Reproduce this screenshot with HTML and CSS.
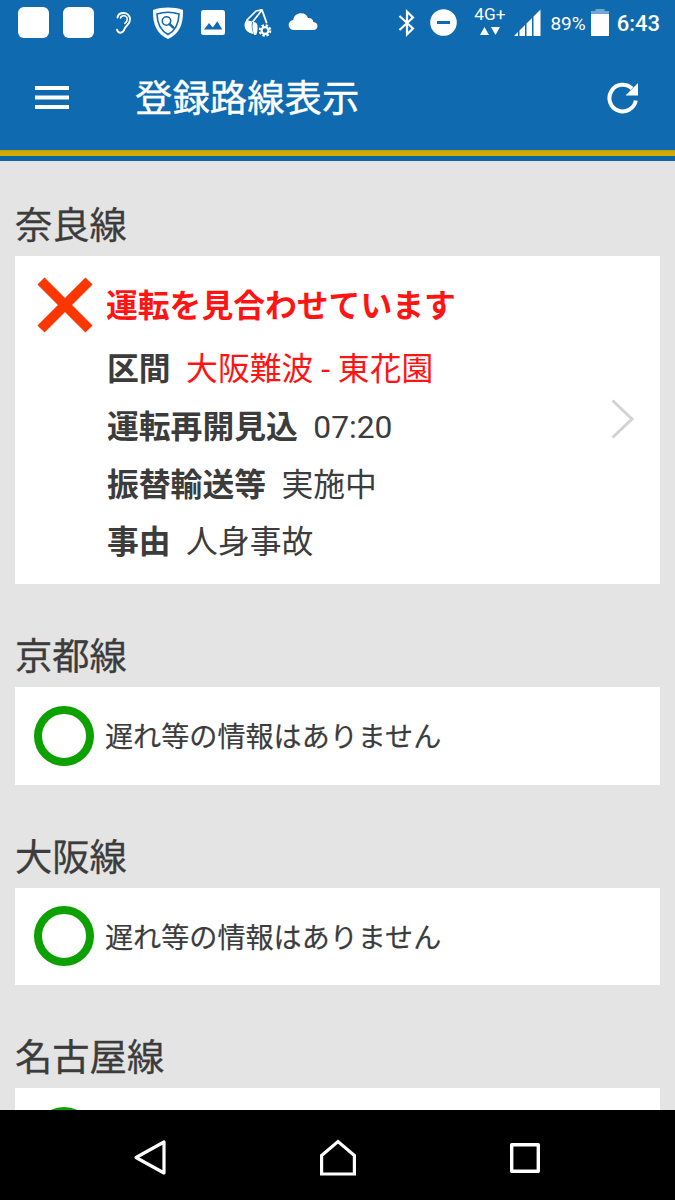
FILE: index.html
```html
<!DOCTYPE html>
<html lang="ja">
<head>
    <meta charset="UTF-8">
    <meta name="viewport" content="width=device-width, initial-scale=1.0">
    <title>登録路線表示</title>
    <link rel="stylesheet" href="styles.css">
</head>
<body>
    <div class="status-bar">
        <div class="notifications">
            <span class="app-square"></span>
            <span class="app-square"></span>
            <svg class="ear" width="17" height="24" viewBox="0 0 17 24" fill="none" stroke="#fff" stroke-width="1.9" stroke-linecap="round">
                <path d="M2.500 6.500C3 3.500 5.300 2 8.500 2c4 0 6.500 2.700 6.500 6.500 0 5-4 5.500-5.500 9.500-.9 2.500-2 3.700-4 3.700-2 0-3-1.200-3.500-3"/>
                <path d="M5.500 7C6 5.300 7 4.800 8.500 4.800c2.500 0 3.700 1.600 3.700 3.700 0 1.800-1 2.800-2.400 3.800" stroke-width="1.600"/>
            </svg>
            <svg class="shield" width="32" height="32" viewBox="0 0 32 32">
                <path d="M1 3C11-.2 21-.2 31 3c.4 14-3.500 23.500-15 29C4.500 26.500.6 17 1 3z" fill="#fff"/>
                <path d="M5 7C12 4.800 20 4.800 27 7c-.3 10-3 16.500-11 20.500C8 23.500 5.300 16.500 5 7z" fill="#fff" stroke="#0f6ab0" stroke-width="1.600"/>
                <circle cx="14.500" cy="14" r="4.200" fill="none" stroke="#0f6ab0" stroke-width="1.600"/>
                <path d="M17.600 17.100l3.500 3.300" stroke="#0f6ab0" stroke-width="2.600" stroke-linecap="round"/>
            </svg>
            <svg class="photo" width="24" height="25" viewBox="0 0 24 25">
                <rect width="24" height="25" rx="2.500" fill="#fff"/>
                <path d="M3 19.500l5-6.500 3.800 4.500 4.500-6.200 5 8.200z" fill="#0f6ab0"/>
            </svg>
            <svg class="bag" width="28" height="28" viewBox="0 0 28 28">
                <path d="M2.500 11.500L12 2l6-1.200M8.500 13L18 1" fill="none" stroke="#fff" stroke-width="1.700" stroke-linejoin="round"/>
                <path d="M18 1l4.500 12.500" fill="none" stroke="#fff" stroke-width="1.900" stroke-linecap="round"/>
                <path d="M2.500 11l5.700 1.500c-1 4-.5 8 1.500 12.500C1.500 24-2 16.500 2.500 11z" fill="#fff"/>
                <path d="M9 13c3.500-.2 5.200 2.500 4.500 7.500-.5 3.500-.5 6-3.300 5.500-1.500-4-2.400-8-1.200-13z" fill="#fff"/>
                <circle cx="21" cy="21.500" r="3.400" fill="none" stroke="#fff" stroke-width="2.200"/>
                <circle cx="21" cy="21.500" r="5.200" fill="none" stroke="#fff" stroke-width="2.200" stroke-dasharray="2.400 1.684"/>
            </svg>
            <svg class="cloud" width="30" height="18" viewBox="0 0 30 18">
                <path d="M6 17a5 5 0 0 1-.7-10C6 2.500 9 .3 13 .3c3.500 0 6 1.700 7 4.700 3.200-.3 5 1.300 5.300 3.900C28 9.200 29.500 10.500 29.500 13s-2 4-4 4z" fill="#fff"/>
            </svg>
        </div>
        <div class="system">
            <svg class="bluetooth" width="18" height="28" viewBox="0 0 18 28" fill="none" stroke="#fff" stroke-width="2.200">
                <path d="M1.500 7L15 19.500l-6 5.800V2.700l6 5.800L1.500 21"/>
            </svg>
            <svg class="dnd" width="27" height="27" viewBox="0 0 27 27">
                <circle cx="13.500" cy="13.500" r="13.300" fill="#fff"/>
                <path d="M7 13.500h13" stroke="#0f6ab0" stroke-width="3"/>
            </svg>
            <div class="network">
                <span>4G+</span>
                <svg width="20" height="8" viewBox="0 0 20 8" fill="#fff">
                    <path d="M0 8L4.500 0 9 8zM11 0h9l-4.500 8z"/>
                </svg>
            </div>
            <svg class="signal" width="27" height="27" viewBox="0 0 27 27" fill="#fff">
                <path d="M0 27l4-4v4zM5.500 21.500l5.500-5.500V27H5.500zM12.500 14.500L18 9v18h-5.500zM19.500 7.500L26.500 .5V27h-7z"/>
            </svg>
            <span class="percent">89%</span>
            <svg class="battery" width="18" height="27" viewBox="0 0 18 27">
                <path d="M4.500 0h9v2H18v4H0V2h4.500z" fill="#6fa6d2"/>
                <path d="M0 5h18v22H0z" fill="#fff"/>
            </svg>
            <span class="clock">6:43</span>
        </div>
    </div>

    <header class="toolbar">
        <svg class="menu" width="34" height="24" viewBox="0 0 34 24" fill="#fff">
            <path d="M0 0h34v4H0zM0 9.500h34v4H0zM0 19h34v4H0z"/>
        </svg>
        <h1>登録路線表示</h1>
        <svg class="reload" width="32" height="32" viewBox="0 0 32 32">
            <path d="M28.800 18.500A13.300 13.300 0 1 1 25 6.500" fill="none" stroke="#fff" stroke-width="4"/>
            <path d="M31 1v12.500H18.500z" fill="#fff"/>
        </svg>
    </header>
    <div class="line-gold"></div>
    <div class="line-blue"></div>

    <main>
        <section>
            <h2>奈良線</h2>
            <div class="card card-stopped">
                <div class="info">
                    <div class="status">
                        <svg class="cross" width="56" height="56" viewBox="0 0 56 56">
                            <path d="M4 4l48 48M52 4L4 52" stroke="#fb3600" stroke-width="10"/>
                        </svg>
                        <strong>運転を見合わせています</strong>
                    </div>
                    <dl>
                        <div class="row"><dt>区間</dt><dd class="red">大阪難波 - 東花園</dd></div>
                        <div class="row"><dt>運転再開見込</dt><dd>07:20</dd></div>
                        <div class="row"><dt>振替輸送等</dt><dd>実施中</dd></div>
                        <div class="row"><dt>事由</dt><dd>人身事故</dd></div>
                    </dl>
                </div>
                <svg class="arrow" width="24" height="40" viewBox="0 0 24 40">
                    <path d="M1.500 1.500L21 20 1.500 38.500" fill="none" stroke="#d3d3d3" stroke-width="3"/>
                </svg>
            </div>
        </section>
        <section>
            <h2>京都線</h2>
            <div class="card card-normal">
                <span class="circle"></span>
                <p>遅れ等の情報はありません</p>
            </div>
        </section>
        <section>
            <h2>大阪線</h2>
            <div class="card card-normal">
                <span class="circle"></span>
                <p>遅れ等の情報はありません</p>
            </div>
        </section>
        <section>
            <h2>名古屋線</h2>
            <div class="card card-normal">
                <span class="circle"></span>
            </div>
        </section>
    </main>

    <nav class="nav-bar">
        <svg width="34" height="38" viewBox="0 0 34 38" fill="none" stroke="#fff" stroke-width="3.200" stroke-linejoin="round">
            <path d="M31 3v31L3 18.500z"/>
        </svg>
        <svg width="38" height="38" viewBox="0 0 38 38" fill="none" stroke="#fff" stroke-width="3.200">
            <path d="M2.600 35V16.500L19 2.500l16.400 14V35z"/>
        </svg>
        <svg width="32" height="32" viewBox="0 0 32 32" fill="none" stroke="#fff" stroke-width="3.400" stroke-linejoin="round">
            <path d="M2.700 2.700h26.600v26.600H2.700z"/>
        </svg>
    </nav>
</body>
</html>
```
FILE: styles.css
```css
* {
    box-sizing: border-box;
}
body {
    font-family: Roboto, "Noto Sans CJK JP", sans-serif;
    background: #e4e4e4;
    color: #3c3c3c;
    margin: 0;
    height: 100vh;
    display: flex;
    flex-direction: column;
    overflow: hidden;
}
svg {
    display: block;
    flex-shrink: 0;
}

/* ステータスバー */
.status-bar {
    height: 45px;
    flex-shrink: 0;
    padding: 0 15px 0 18px;
    background: #0f6ab0;
    color: #fff;
    display: flex;
    justify-content: space-between;
    align-items: center;
}
.notifications, .system {
    display: flex;
    align-items: center;
}
.app-square {
    width: 31px;
    height: 31px;
    margin-right: 14px;
    border-radius: 6px;
    background: #fff;
}
.ear {
    margin-left: 7px;
}
.shield {
    margin-left: 20px;
}
.photo {
    margin-left: 17px;
}
.bag {
    margin-left: 19px;
}
.cloud {
    margin: 0 0 2px 16px;
}
.dnd {
    margin-left: 14px;
}
.network {
    margin: 0 0 6px 17px;
    display: flex;
    flex-direction: column;
    align-items: center;
    font-size: 17.2px;
    line-height: 20px;
}
.network svg {
    margin-top: 3px;
}
.signal {
    margin-left: 9px;
}
.percent {
    margin-left: 9px;
    padding-top: 2px;
    font-size: 19px;
}
.battery {
    margin-left: 5px;
}
.clock {
    margin-left: 8px;
    padding-top: 2px;
    font-size: 22px;
    font-weight: 500;
}

/* ヘッダー */
.toolbar {
    height: 105px;
    flex-shrink: 0;
    padding: 0 36px 0 35px;
    background: #0f6ab0;
    color: #fff;
    display: flex;
    align-items: center;
}
.toolbar h1 {
    flex: 1;
    margin: 3px 0 0 66px;
    font-size: 37.4px;
    font-weight: 400;
    line-height: 48px;
    -webkit-text-stroke: 0.4px;
}
.line-gold {
    height: 6px;
    flex-shrink: 0;
    background: linear-gradient(#c09a10, #d3ad05 50%, #d3ad05);
}
.line-blue {
    height: 5px;
    flex-shrink: 0;
    background: #0f64a8;
}

/* 路線一覧 */
main {
    flex: 1;
    min-height: 0;
    overflow: hidden;
    padding: 0 15px;
}
section {
    padding-top: 39px;
}
section + section {
    padding-top: 47px;
}
h2 {
    margin: 0;
    height: 56px;
    font-size: 37.3px;
    font-weight: 400;
    line-height: 53px;
    -webkit-text-stroke: 0.3px;
}
.card {
    background: #fff;
    display: flex;
    align-items: center;
}
.card-stopped {
    height: 328px;
    justify-content: space-between;
    padding: 7px 25px 0 22px;
}
.status {
    display: flex;
    align-items: center;
    gap: 13px;
    height: 60px;
    color: #ff1414;
    font-size: 31.8px;
}
.status strong {
    margin-bottom: 4px;
}
dl {
    margin: 6px 0 0 70px;
    font-size: 31.8px;
}
.row {
    display: flex;
    align-items: baseline;
    gap: 15.5px;
    height: 57.6px;
    line-height: 57.6px;
}
dt {
    font-weight: 700;
}
dd {
    margin: 0;
}
.red {
    color: #ff1414;
}
.arrow {
    margin-bottom: 9px;
}
.card-normal {
    height: 97.5px;
    padding-left: 19px;
    gap: 11px;
    font-size: 28.1px;
}
.card-normal p {
    margin: 0 0 2px;
    -webkit-text-stroke: 0.2px;
}
.circle {
    width: 60px;
    height: 60px;
    border: 8px solid #0ca000;
    border-radius: 50%;
}

/* ナビゲーションバー */
.nav-bar {
    height: 90px;
    flex-shrink: 0;
    padding: 6px 134px 0 133px;
    background: #000;
    display: flex;
    justify-content: space-between;
    align-items: center;
}
```
